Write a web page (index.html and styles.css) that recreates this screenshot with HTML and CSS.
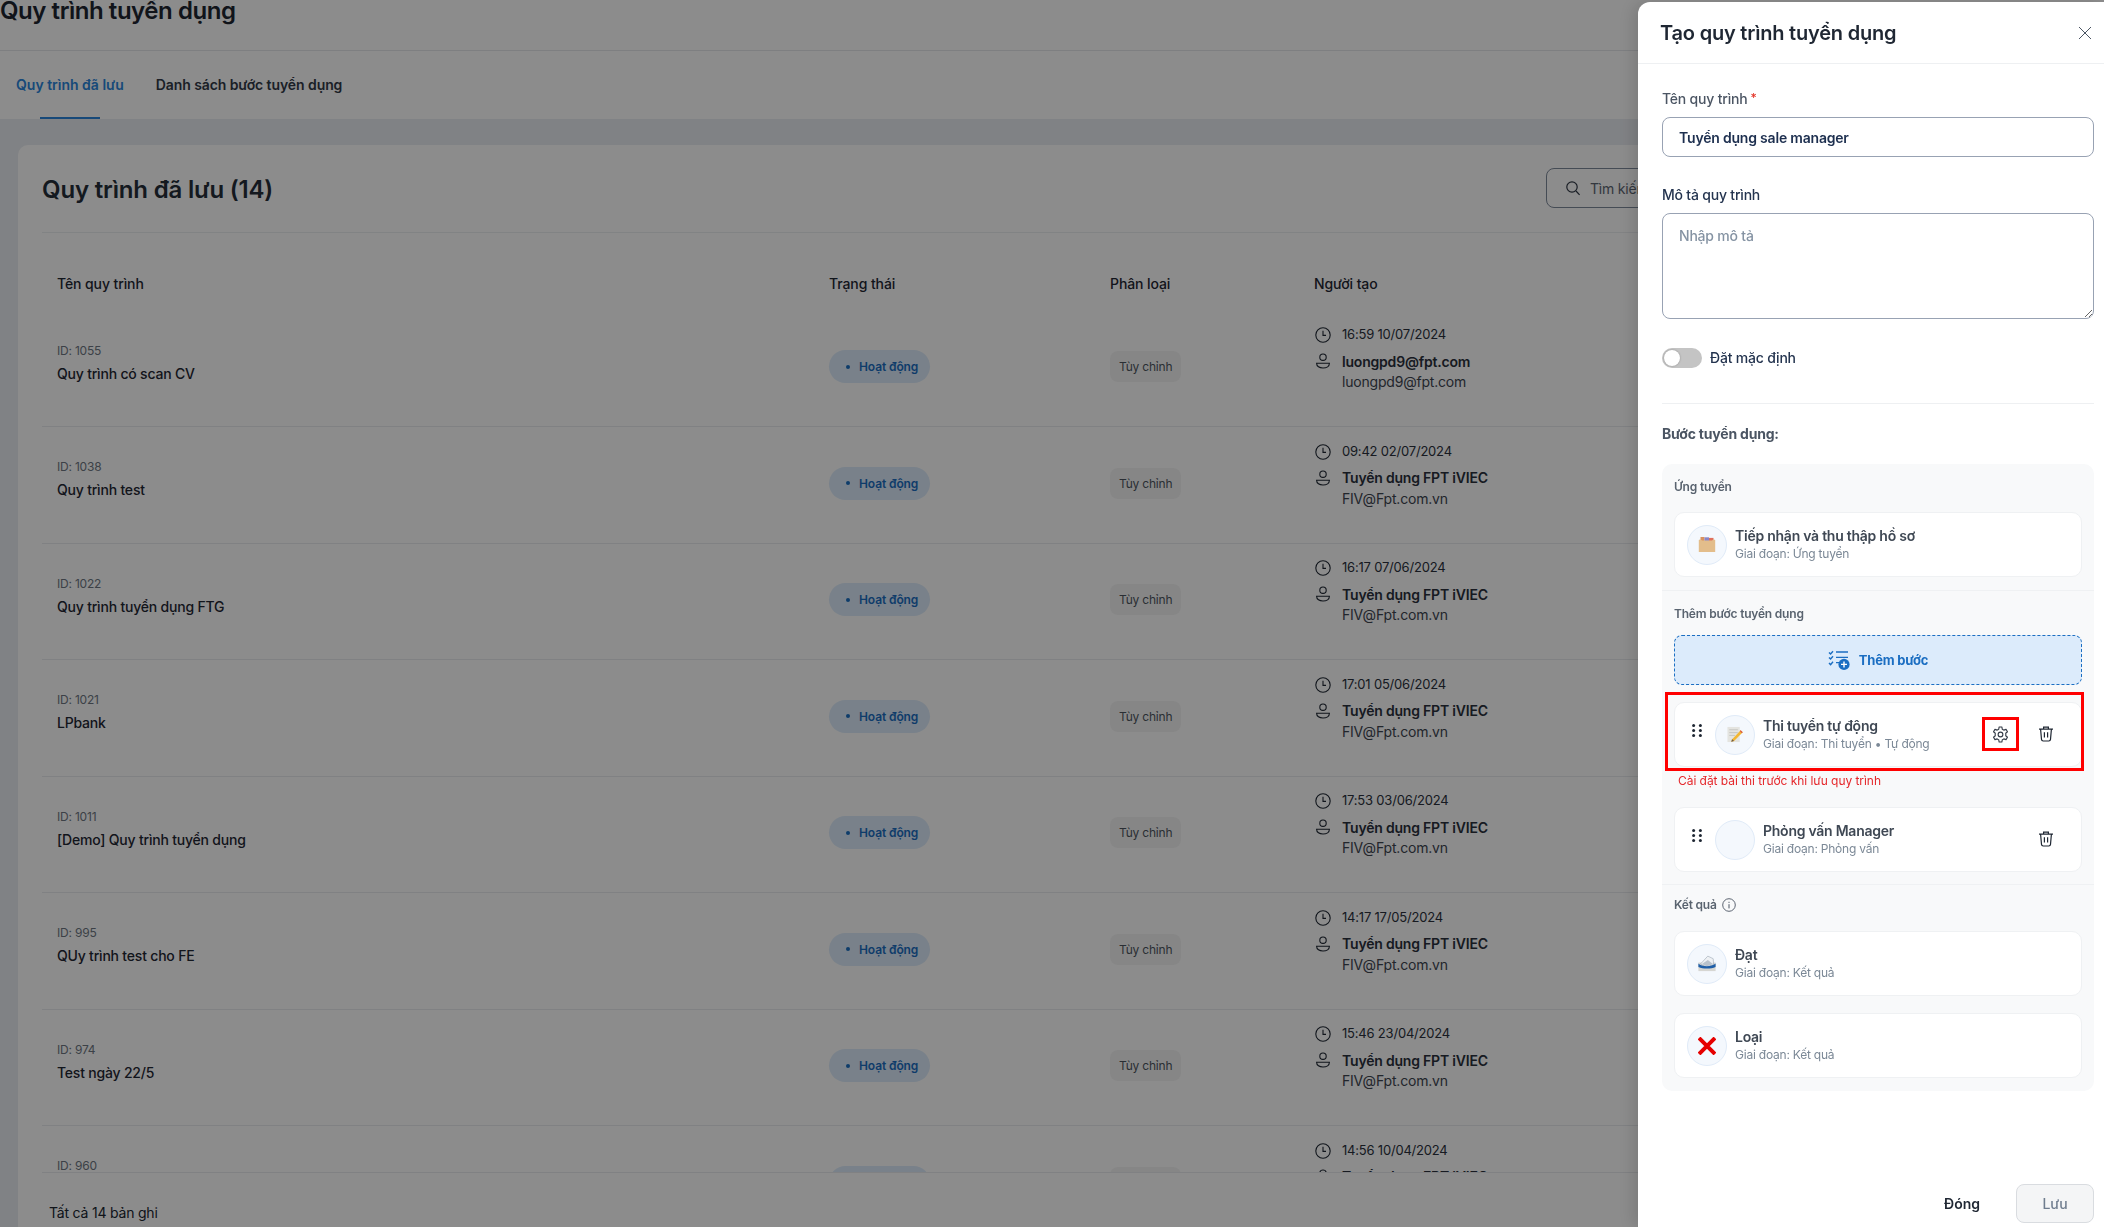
FILE: index.html
```html
<!DOCTYPE html>
<html lang="vi">
<head>
<meta charset="utf-8">
<title>Quy trình tuyển dụng</title>
<link rel="stylesheet" href="styles.css">
</head>
<body>
<svg class="sprites" width="0" height="0" aria-hidden="true">
  <symbol id="clock" viewBox="0 0 16 16"><circle cx="8" cy="8" r="7.2" fill="none" stroke="currentColor" stroke-width="1.1"/><path d="M8 3.8V8.4H11" fill="none" stroke="currentColor" stroke-width="1.1"/></symbol>
  <symbol id="user" viewBox="0 0 16 16"><circle cx="8" cy="4.2" r="3.2" fill="none" stroke="currentColor" stroke-width="1.1"/><path d="M1.6 10.2H14.4C14.4 13.4 11.6 15 8 15S1.6 13.4 1.6 10.2Z" fill="none" stroke="currentColor" stroke-width="1.1"/></symbol>
  <symbol id="trash" viewBox="0 0 16 16"><path d="M1 3.2H15M5.6 3V1.2H10.4V3M2.6 3.2L3.5 13.4C3.6 14.4 4.2 15 5.2 15H10.8C11.8 15 12.4 14.4 12.5 13.4L13.4 3.2M6.4 6.2V11.6M9.6 6.2V11.6" fill="none" stroke="currentColor" stroke-width="1.2"/></symbol>
  <symbol id="dots" viewBox="0 0 10 13"><g fill="currentColor"><circle cx="1.6" cy="1.6" r="1.5"/><circle cx="8.4" cy="1.6" r="1.5"/><circle cx="1.6" cy="6.5" r="1.5"/><circle cx="8.4" cy="6.5" r="1.5"/><circle cx="1.6" cy="11.4" r="1.5"/><circle cx="8.4" cy="11.4" r="1.5"/></g></symbol>
</svg>

<div class="page">
  <header class="page-head">
    <div class="title-row"><h1 class="page-title">Quy trình tuyển dụng</h1></div>
    <nav class="tabs">
      <a class="tab tab-active">Quy trình đã lưu</a>
      <a class="tab">Danh sách bước tuyển dụng</a>
    </nav>
  </header>

  <main class="content">
    <section class="card">
      <div class="card-head">
        <h2 class="card-title">Quy trình đã lưu (14)</h2>
        <div class="search">
          <svg class="search-icon" viewBox="0 0 16 16"><circle cx="7" cy="7" r="5.2" fill="none" stroke="currentColor" stroke-width="1.2"/><path d="M11 11L14.6 14.8" stroke="currentColor" stroke-width="1.2"/></svg>
          <span>Tìm kiếm</span>
        </div>
      </div>

      <div class="table">
        <div class="row row-head">
          <div>Tên quy trình</div><div>Trạng thái</div><div>Phân loại</div><div>Người tạo</div>
        </div>

        <div class="row">
          <div class="cell-name"><div class="rid">ID: 1055</div><div class="rname">Quy trình có scan CV</div></div>
          <div><span class="badge"><i></i>Hoạt động</span></div>
          <div><span class="chip">Tùy chỉnh</span></div>
          <div class="cell-user">
            <div class="line"><svg class="ico"><use href="#clock"/></svg>16:59 10/07/2024</div>
            <div class="line line-name"><svg class="ico"><use href="#user"/></svg>luongpd9@fpt.com</div>
            <div class="mail">luongpd9@fpt.com</div>
          </div>
        </div>

        <div class="row">
          <div class="cell-name"><div class="rid">ID: 1038</div><div class="rname">Quy trình test</div></div>
          <div><span class="badge"><i></i>Hoạt động</span></div>
          <div><span class="chip">Tùy chỉnh</span></div>
          <div class="cell-user">
            <div class="line"><svg class="ico"><use href="#clock"/></svg>09:42 02/07/2024</div>
            <div class="line line-name"><svg class="ico"><use href="#user"/></svg>Tuyển dụng FPT iVIEC</div>
            <div class="mail">FIV@Fpt.com.vn</div>
          </div>
        </div>

        <div class="row">
          <div class="cell-name"><div class="rid">ID: 1022</div><div class="rname">Quy trình tuyển dụng FTG</div></div>
          <div><span class="badge"><i></i>Hoạt động</span></div>
          <div><span class="chip">Tùy chỉnh</span></div>
          <div class="cell-user">
            <div class="line"><svg class="ico"><use href="#clock"/></svg>16:17 07/06/2024</div>
            <div class="line line-name"><svg class="ico"><use href="#user"/></svg>Tuyển dụng FPT iVIEC</div>
            <div class="mail">FIV@Fpt.com.vn</div>
          </div>
        </div>

        <div class="row">
          <div class="cell-name"><div class="rid">ID: 1021</div><div class="rname">LPbank</div></div>
          <div><span class="badge"><i></i>Hoạt động</span></div>
          <div><span class="chip">Tùy chỉnh</span></div>
          <div class="cell-user">
            <div class="line"><svg class="ico"><use href="#clock"/></svg>17:01 05/06/2024</div>
            <div class="line line-name"><svg class="ico"><use href="#user"/></svg>Tuyển dụng FPT iVIEC</div>
            <div class="mail">FIV@Fpt.com.vn</div>
          </div>
        </div>

        <div class="row">
          <div class="cell-name"><div class="rid">ID: 1011</div><div class="rname">[Demo] Quy trình tuyển dụng</div></div>
          <div><span class="badge"><i></i>Hoạt động</span></div>
          <div><span class="chip">Tùy chỉnh</span></div>
          <div class="cell-user">
            <div class="line"><svg class="ico"><use href="#clock"/></svg>17:53 03/06/2024</div>
            <div class="line line-name"><svg class="ico"><use href="#user"/></svg>Tuyển dụng FPT iVIEC</div>
            <div class="mail">FIV@Fpt.com.vn</div>
          </div>
        </div>

        <div class="row">
          <div class="cell-name"><div class="rid">ID: 995</div><div class="rname">QUy trình test cho FE</div></div>
          <div><span class="badge"><i></i>Hoạt động</span></div>
          <div><span class="chip">Tùy chỉnh</span></div>
          <div class="cell-user">
            <div class="line"><svg class="ico"><use href="#clock"/></svg>14:17 17/05/2024</div>
            <div class="line line-name"><svg class="ico"><use href="#user"/></svg>Tuyển dụng FPT iVIEC</div>
            <div class="mail">FIV@Fpt.com.vn</div>
          </div>
        </div>

        <div class="row">
          <div class="cell-name"><div class="rid">ID: 974</div><div class="rname">Test ngày 22/5</div></div>
          <div><span class="badge"><i></i>Hoạt động</span></div>
          <div><span class="chip">Tùy chỉnh</span></div>
          <div class="cell-user">
            <div class="line"><svg class="ico"><use href="#clock"/></svg>15:46 23/04/2024</div>
            <div class="line line-name"><svg class="ico"><use href="#user"/></svg>Tuyển dụng FPT iVIEC</div>
            <div class="mail">FIV@Fpt.com.vn</div>
          </div>
        </div>

        <div class="row">
          <div class="cell-name"><div class="rid">ID: 960</div><div class="rname">Quy trình</div></div>
          <div><span class="badge"><i></i>Hoạt động</span></div>
          <div><span class="chip">Tùy chỉnh</span></div>
          <div class="cell-user">
            <div class="line"><svg class="ico"><use href="#clock"/></svg>14:56 10/04/2024</div>
            <div class="line line-name"><svg class="ico"><use href="#user"/></svg>Tuyển dụng FPT iVIEC</div>
            <div class="mail">FIV@Fpt.com.vn</div>
          </div>
        </div>
      </div>

      <footer class="card-foot">Tất cả 14 bản ghi</footer>
    </section>
  </main>
</div>

<div class="overlay"></div>

<aside class="drawer">
  <div class="drawer-head">
    <h2 class="drawer-title">Tạo quy trình tuyển dụng</h2>
    <svg class="close" viewBox="0 0 14 14"><path d="M1 1L13 13M13 1L1 13" stroke="currentColor" stroke-width="1"/></svg>
  </div>

  <div class="drawer-body">
    <label class="label label-first">Tên quy trình<span class="req">*</span></label>
    <input class="input" type="text" value="Tuyển dụng sale manager">
    <label class="label label-second">Mô tả quy trình</label>
    <textarea class="textarea" placeholder="Nhập mô tả"></textarea>

    <div class="switch-row">
      <span class="switch"><i></i></span>
      <span class="switch-label">Đặt mặc định</span>
    </div>

    <hr class="rule">
    <div class="steps-title">Bước tuyển dụng:</div>

    <div class="panel">
      <section class="pane pane-apply">
        <div class="pane-label">Ứng tuyển</div>
        <div class="step step-first">
          <span class="step-ico">
            <svg viewBox="0 0 18 16" class="emoji"><rect x="2.5" y="0.5" width="4" height="4" fill="#d9925f"/><rect x="6.5" y="0.8" width="4.5" height="4" fill="#8a86c6"/><rect x="11" y="1.4" width="4.5" height="3.5" fill="#e0705c"/><path d="M0.8 3.6L2.6 2.8L4 4H14L15.5 2.8L17.2 3.6V15.4H0.8Z" fill="#e3bd8b"/></svg>
          </span>
          <div class="step-text"><div class="step-name">Tiếp nhận và thu thập hồ sơ</div><div class="step-sub">Giai đoạn: Ứng tuyển</div></div>
        </div>
      </section>

      <section class="pane pane-add">
        <div class="pane-label">Thêm bước tuyển dụng</div>
        <div class="add-step">
          <svg class="add-ico" viewBox="0 0 22 20">
            <g fill="none" stroke="#1b6ec2" stroke-width="1.4">
              <path d="M1 2.4L2.6 4L5 1.2M1 7.4L2.6 9L5 6.2M1 13L2.6 14.6L5 11.8"/>
              <path d="M8 2H20M8 7.4H20M8 12.6H12"/>
            </g>
            <circle cx="16" cy="14.4" r="5.6" fill="#1b6ec2"/>
            <path d="M16 11.4V17.4M13 14.4H19" stroke="#fff" stroke-width="1.4"/>
          </svg>
          <span>Thêm bước</span>
        </div>

        <div class="step step-auto">
          <div class="red-box"></div>
          <svg class="drag"><use href="#dots"/></svg>
          <span class="step-ico">
            <svg viewBox="0 0 18 18" class="emoji"><rect x="1" y="1" width="13" height="16" fill="#e4e4e0"/><path d="M3 4H12M3 7H12M3 10H9" stroke="#c4c4bf" stroke-width="1"/><path d="M6 14L15 4.5L17.2 6.6L8 16L5 16.8Z" fill="#f2b632"/><path d="M14 5.4L15 4.5L17.2 6.6L16.2 7.6Z" fill="#d9574a"/><path d="M5 16.8L6 14L8 16Z" fill="#6b5b4b"/></svg>
          </span>
          <div class="step-text"><div class="step-name">Thi tuyển tự động</div><div class="step-sub">Giai đoạn: Thi tuyển • Tự động</div></div>
          <div class="step-actions">
            <span class="gear-box">
              <svg class="ico-gear" viewBox="0 0 24 24"><path d="M10.3 2.5H13.7L14.3 5.4C15 5.7 15.6 6 16.2 6.5L19 5.5L20.8 8.5L18.6 10.4C18.7 11.1 18.7 12.9 18.6 13.6L20.8 15.5L19 18.5L16.2 17.5C15.6 18 15 18.3 14.3 18.6L13.7 21.5H10.3L9.7 18.6C9 18.3 8.4 18 7.8 17.5L5 18.5L3.2 15.5L5.4 13.6C5.3 12.9 5.3 11.1 5.4 10.4L3.2 8.5L5 5.5L7.8 6.5C8.4 6 9 5.7 9.7 5.4Z" fill="none" stroke="currentColor" stroke-width="1.4" stroke-linejoin="round"/><circle cx="12" cy="12" r="3" fill="none" stroke="currentColor" stroke-width="1.4"/></svg>
            </span>
            <svg class="ico-trash"><use href="#trash"/></svg>
          </div>
        </div>
        <div class="step-error">Cài đặt bài thi trước khi lưu quy trình</div>

        <div class="step step-manual">
          <svg class="drag"><use href="#dots"/></svg>
          <span class="step-ico"></span>
          <div class="step-text"><div class="step-name">Phỏng vấn Manager</div><div class="step-sub">Giai đoạn: Phỏng vấn</div></div>
          <div class="step-actions"><svg class="ico-trash"><use href="#trash"/></svg></div>
        </div>
      </section>

      <section class="pane pane-result">
        <div class="pane-label pane-label-info">Kết quả
          <svg class="info" viewBox="0 0 14 14"><circle cx="7" cy="7" r="6.3" fill="none" stroke="currentColor" stroke-width="0.9"/><path d="M7 6.2V10.4M7 3.8V4.9" stroke="currentColor" stroke-width="1"/></svg>
        </div>
        <div class="step step-first">
          <span class="step-ico">
            <svg viewBox="0 0 18 16" class="emoji"><path d="M0.4 7H17.6V15.6H0.4Z" fill="#d6d6d2"/><path d="M2.5 8.5L9.8 0.6L15.2 3.2L15.6 9L9 11.5Z" fill="#eef1f4" stroke="#8d99a6" stroke-width="0.5"/><path d="M4 8.5L9.8 4.5L15 8.5L9 11Z" fill="#b8c2cc"/><path d="M0.4 8C4 11.4 13 11.6 17.6 8V11.4C13 13.4 5 13.4 0.4 11.4Z" fill="#1f5fa8"/></svg>
          </span>
          <div class="step-text"><div class="step-name">Đạt</div><div class="step-sub">Giai đoạn: Kết quả</div></div>
        </div>
        <div class="step step-second">
          <span class="step-ico">
            <svg viewBox="0 0 18 18" class="emoji-x"><path d="M1 1L17 17M17 1L1 17" stroke="#e60000" stroke-width="4"/></svg>
          </span>
          <div class="step-text"><div class="step-name">Loại</div><div class="step-sub">Giai đoạn: Kết quả</div></div>
        </div>
      </section>
    </div>
  </div>

  <div class="drawer-foot">
    <button class="btn-text">Đóng</button>
    <button class="btn-save">Lưu</button>
  </div>
</aside>
</body>
</html>
```

FILE: styles.css
```css
* { box-sizing: border-box; }
html, body { margin: 0; height: 1227px; overflow: hidden; }
body { font-family: Inter, "Noto Sans", "Liberation Sans", sans-serif; color: #1f2733; background: #eaedf2; letter-spacing: -0.2px; }
h1, h2 { margin: 0; }
.sprites { display: block; height: 0; }

.page { height: 1227px; display: flex; flex-direction: column; }
.page-head { background: #fff; height: 119px; flex: none; }
.title-row { height: 51px; border-bottom: 1px solid #e6e8ec; overflow: hidden; }
.page-title { font-size: 24px; font-weight: 600; line-height: 32px; margin-top: -5px; color: #202631; letter-spacing: -0.45px; }
.tabs { display: flex; height: 68px; padding-left: 16px; gap: 32px; }
.tab { position: relative; font-size: 14px; font-weight: 600; line-height: 20px; padding-top: 24px; color: #323a47; letter-spacing: -0.08px; }
.tab-active { color: #2a86dc; letter-spacing: 0; }
.tab-active::after { content: ""; position: absolute; left: 24px; width: 60px; bottom: 0; height: 2px; background: #2a86dc; }

.content { flex: 1; min-height: 0; padding: 26px 18px 0 18px; }
.card { height: 100%; background: #fff; border-radius: 10px 10px 0 0; padding: 0 24px; display: flex; flex-direction: column; }
.card-head { flex: none; height: 88px; border-bottom: 1px solid #eceef1; display: flex; align-items: center; justify-content: space-between; padding-bottom: 1px; }
.card-title { font-size: 24px; font-weight: 600; line-height: 32px; margin-top: 4px; color: #262e3a; letter-spacing: -0.17px; }
.search { width: 516px; height: 40px; border: 1px solid #7f8b9c; border-radius: 8px; display: flex; align-items: center; gap: 9px; padding-left: 18px; font-size: 14px; color: #5d6673; }
.search-icon { width: 16px; height: 16px; color: #2f3744; }

.table { flex: 1; min-height: 0; overflow: hidden; }
.row { display: grid; grid-template-columns: 772px 281px 204px 1fr; padding-left: 15px; height: 116.5px; padding-bottom: 3px; border-bottom: 1px solid #e9ebee; align-items: center; font-size: 14px; }
.row-head { height: 77.5px; padding: 41px 0 0 15px; border-bottom: 0; align-items: start; line-height: 20px; font-weight: 500; color: #1f2733; letter-spacing: -0.1px; }
.cell-name { align-self: start; padding-top: 32px; }
.rid { font-size: 12px; line-height: 16px; color: #6e7782; }
.rname { font-size: 14px; font-weight: 500; line-height: 20px; margin-top: 5px; color: #1f2733; }
.badge { display: inline-flex; align-items: center; height: 33px; width: 101px; padding-left: 17px; border-radius: 17px; background: #dcebfb; color: #1b6ec2; font-size: 12px; font-weight: 600; letter-spacing: -0.1px; }
.badge i { width: 4px; height: 4px; margin-right: 9px; border-radius: 50%; background: #1b6ec2; }
.chip { display: inline-flex; align-items: center; height: 31px; padding: 0 9px; border-radius: 8px; background: #f5f5f5; color: #4d5560; font-size: 12px; }
.cell-user { align-self: start; padding-top: 13.5px; }
.line { display: flex; align-items: center; gap: 11px; height: 20px; font-size: 13px; color: #2a313c; margin-left: 1px; }
.line:first-child .ico { margin-top: 2px; }
.line-name { margin-top: 7px; font-size: 14px; font-weight: 600; }
.ico { width: 16px; height: 16px; flex: none; color: #1f2733; }
.mail { margin: 1px 0 0 28px; font-size: 14px; line-height: 20px; color: #3e4651; }
.card-foot { flex: none; height: 55px; border-top: 1px solid #e9ebee; padding: 30px 0 0 7px; font-size: 14px; line-height: 20px; color: #202631; }

.overlay { position: fixed; inset: 0; background: rgba(0, 0, 0, 0.45); }

.drawer { position: fixed; top: 2px; left: 1638px; width: 466px; bottom: 0; background: #fff; border-radius: 12px 0 0 0; box-shadow: -6px 0 16px rgba(0, 0, 0, 0.12); display: flex; flex-direction: column; }
.drawer-head { flex: none; height: 62px; border-bottom: 1px solid #eef0f2; display: flex; align-items: center; justify-content: space-between; padding: 0 12px 0 22px; }
.drawer-title { font-size: 20px; font-weight: 600; line-height: 28px; color: #1f2733; }
.close { width: 14px; height: 14px; color: #4b5563; }
.drawer-body { flex: 1; min-height: 0; padding: 0 10px 0 24px; display: flex; flex-direction: column; }
.label { display: block; font-size: 14px; line-height: 20px; font-weight: 500; margin-bottom: 8px; color: #4b5563; }
.label-first { margin-top: 24px; }
.label-second { margin-top: 28px; color: #24344f; }
.req { color: #e5372b; margin-left: 3px; font-size: 12px; vertical-align: 2px; }
.input, .textarea { display: block; width: 100%; border: 1px solid #98a2b3; border-radius: 8px; font-family: inherit; font-size: 14px; letter-spacing: -0.2px; padding: 0 16px; outline: none; background: #fff; flex: none; }
.input { height: 40px; color: #1d2f4f; font-weight: 600; }
.textarea { height: 106px; padding-top: 13px; }
.textarea::placeholder { color: #8593a3; font-weight: 500; opacity: 1; }
.switch-row { margin-top: 29px; display: flex; align-items: center; gap: 8px; height: 20px; flex: none; }
.switch { width: 40px; height: 20px; border-radius: 10px; background: #c4c4c4; padding: 2px; display: block; }
.switch i { display: block; width: 16px; height: 16px; border-radius: 50%; background: #fff; box-shadow: 0 0 2px rgba(0,0,0,.3); }
.switch-label { font-size: 14px; font-weight: 500; color: #24344f; margin-top: -2px; }
.rule { width: 100%; margin: 35px 0 0; border: 0; border-top: 1px solid #eef0f2; flex: none; }
.steps-title { margin-top: 20px; font-size: 14px; line-height: 20px; font-weight: 700; color: #4b5563; flex: none; }

.panel { margin-top: 20px; width: 432px; height: 627px; background: #f8f9fa; border-radius: 10px; flex: none; }
.pane { padding: 12px; border-bottom: 1px solid #eff1f3; }
.pane:last-child { border-bottom: 0; }
.pane-apply { height: 127px; padding-top: 13px; }
.pane-add { height: 294px; padding-top: 13px; }
.pane-result { padding-top: 10px; }
.pane-label { font-size: 12px; line-height: 20px; font-weight: 600; color: #59636f; }
.pane-label-info { display: flex; align-items: center; gap: 5px; }
.info { width: 14px; height: 14px; color: #4b5563; }

.step { position: relative; height: 65px; display: flex; align-items: center; background: #fff; border: 1px solid #eff1f3; border-radius: 10px; }
.step-first { margin-top: 15px; padding-left: 12px; }
.pane-result .step-first { margin-top: 16px; }
.step-second { margin-top: 17px; padding-left: 12px; }
.step-auto { margin-top: 17px; padding-left: 17px; }
.step-manual { margin-top: 16px; padding-left: 17px; }
.drag { width: 10px; height: 13px; flex: none; margin: -8px 13px 0 0; color: #1f2733; }
.step-ico { width: 40px; height: 40px; flex: none; margin-right: 8px; border: 1px solid #e0ebf8; border-radius: 50%; background: #f4f8fd; display: flex; align-items: center; justify-content: center; }
.emoji { width: 18px; height: 17px; }
.emoji-x { width: 18px; height: 18px; }
.step-text { margin-top: -2px; }
.step-name { font-size: 14px; line-height: 20px; font-weight: 600; color: #3f4854; letter-spacing: -0.25px; }
.step-sub { font-size: 12px; line-height: 16px; color: #7b8896; letter-spacing: -0.22px; }
.step-actions { margin-left: auto; display: flex; align-items: center; gap: 19px; padding-right: 27px; margin-top: -1px; }
.gear-box { width: 37px; height: 34px; border: 3px solid #f00; display: flex; align-items: center; justify-content: center; color: #333b47; }
.ico-gear { width: 19px; height: 19px; }
.ico-trash { width: 16px; height: 16px; color: #1f2733; }
.red-box { position: absolute; top: -11px; left: -10px; right: -3px; bottom: -5px; border: 3px solid #f00; pointer-events: none; }
.step-error { margin-top: 4px; padding-left: 4px; font-size: 12px; line-height: 20px; color: #e5272b; letter-spacing: -0.05px; }

.add-step { margin-top: 11px; height: 50px; border: 1px dashed #1b6ec2; border-radius: 8px; background: #dcebfb; display: flex; align-items: center; justify-content: center; gap: 9px; color: #1b6ec2; font-size: 13px; font-weight: 700; }
.add-ico { width: 22px; height: 20px; }

.drawer-foot { flex: none; display: flex; align-items: center; justify-content: flex-end; gap: 36px; padding: 0 10px 4px 0; }
.btn-text { border: 0; background: none; padding: 0; font: 600 14px Inter, sans-serif; color: #1f2733; }
.btn-save { width: 78px; height: 39px; border: 1px solid #d9dce0; border-radius: 8px; background: #f4f5f6; font: 500 14px Inter, sans-serif; color: #6f7d8f; }
```
